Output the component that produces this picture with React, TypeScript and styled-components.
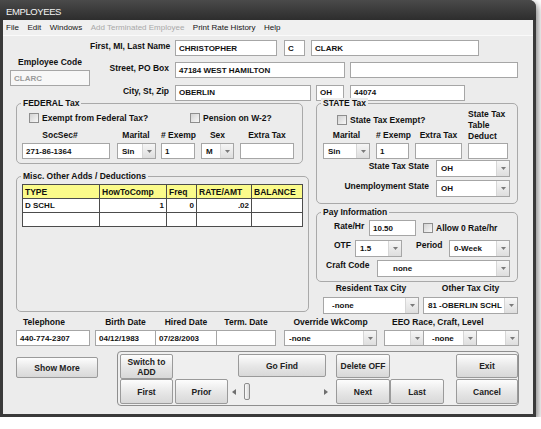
import styled, { createGlobalStyle } from "styled-components"

const FONT = `"Liberation Sans", Arial, sans-serif`

const GlobalStyle = createGlobalStyle`
  html, body {
    margin: 0;
    padding: 0;
    background: #fff;
  }
  body {
    font-family: ${FONT};
    color: #111;
  }
  *, *::before, *::after {
    box-sizing: border-box;
  }
`

/* ---------- window chrome ---------- */

const Window = styled.div`
  width: 536px;
  height: 417px;
  display: flex;
  flex-direction: column;
  background: #3a3a3a;
  padding: 0 3px 3px;
  border-radius: 0 7px 0 0;
  box-shadow: 2px 3px 7px rgba(0, 0, 0, 0.5);
`

const TitleBar = styled.div`
  height: 20px;
  margin: 0 -3px;
  padding: 2px 0 0 6px;
  display: flex;
  align-items: center;
  color: #f4f4f4;
  font-size: 9.5px;
  letter-spacing: -0.4px;
  background: linear-gradient(#4a4a4a, #2d2d2d);
  border-radius: 0 7px 0 0;
`

const Client = styled.div`
  flex: 1;
  display: flex;
  flex-direction: column;
  background: #ececec;
`

const MenuBar = styled.div`
  height: 16px;
  display: flex;
  align-items: center;
  gap: 8.5px;
  padding-left: 3px;
  background: #f0f0f0;
  border-bottom: 1px solid #fafafa;
  font-size: 8px;
`

const MenuItem = styled.span<{ $disabled?: boolean }>`
  color: ${({ $disabled }) => ($disabled ? "#a9a9a9" : "#151515")};
`

/* ---------- basic controls ---------- */

const Label = styled.div<{ $align?: "left" | "center" | "right"; $w?: number; $pad?: number }>`
  font-weight: bold;
  font-size: 8.5px;
  line-height: 10px;
  white-space: nowrap;
  text-align: ${({ $align = "left" }) => $align};
  ${({ $w }) => ($w !== undefined ? `width: ${$w}px; flex: none;` : "")}
  padding-top: ${({ $pad = 0 }) => $pad}px;
`

const TextBox = styled.div<{ $w: number; $h?: number; $right?: boolean; $muted?: boolean }>`
  width: ${({ $w }) => $w}px;
  height: ${({ $h = 16 }) => $h}px;
  flex: none;
  display: flex;
  align-items: center;
  justify-content: ${({ $right }) => ($right ? "flex-end" : "flex-start")};
  padding: 0 3px;
  background: ${({ $muted }) => ($muted ? "#f7f7f7" : "#fff")};
  border: 1px solid #a6a6a6;
  color: ${({ $muted }) => ($muted ? "#9a9a9a" : "#111")};
  font-weight: bold;
  font-size: 8px;
  white-space: nowrap;
  overflow: hidden;
`

const ComboFrame = styled.div<{ $w: number; $h?: number }>`
  width: ${({ $w }) => $w}px;
  height: ${({ $h = 17 }) => $h}px;
  flex: none;
  display: flex;
  background: #fff;
  border: 1px solid #a6a6a6;
`

const ComboValue = styled.div<{ $indent?: number }>`
  flex: 1;
  display: flex;
  align-items: center;
  padding-left: ${({ $indent = 4 }) => $indent}px;
  font-weight: bold;
  font-size: 8px;
  white-space: nowrap;
  overflow: hidden;
`

const ComboButton = styled.div`
  width: 13px;
  flex: none;
  display: flex;
  align-items: center;
  justify-content: center;
  border-left: 1px solid #d6d6d6;
  background: linear-gradient(#f6f6f6, #dedede);
`

const Combo = ({ w, h, value = "", indent }: { w: number; h?: number; value?: string; indent?: number }) => (
  <ComboFrame $w={w} $h={h}>
    <ComboValue $indent={indent}>{value}</ComboValue>
    <ComboButton>
      <svg width="5" height="3" viewBox="0 0 5 3">
        <path d="M0 0h5L2.5 3z" fill="#7a7a7a" />
      </svg>
    </ComboButton>
  </ComboFrame>
)

const CheckRow = styled.div`
  display: flex;
  align-items: center;
  gap: 3px;
`

const CheckSquare = styled.div`
  width: 10px;
  height: 10px;
  flex: none;
  border: 1px solid #8e8e8e;
  background: linear-gradient(135deg, #d2d2d2, #f8f8f8);
`

const Check = ({ label }: { label: string }) => (
  <CheckRow>
    <CheckSquare />
    <Label>{label}</Label>
  </CheckRow>
)

const Group = styled.div<{ $w: number; $h: number }>`
  position: relative;
  width: ${({ $w }) => $w}px;
  height: ${({ $h }) => $h}px;
  flex: none;
  border: 1px solid #a9a9a9;
  border-radius: 5px;
`

const GroupTitle = styled.div`
  position: absolute;
  top: -6px;
  left: 4px;
  padding: 0 2px;
  background: #ececec;
  font-weight: bold;
  font-size: 8.5px;
  line-height: 11px;
  white-space: nowrap;
`

const Button = styled.div<{ $w: number; $h?: number }>`
  width: ${({ $w }) => $w}px;
  height: ${({ $h = 25 }) => $h}px;
  flex: none;
  display: flex;
  align-items: center;
  justify-content: center;
  text-align: center;
  border: 1px solid #9a9a9a;
  border-radius: 2px;
  background: linear-gradient(#fdfdfd, #e6e6e6 55%, #d8d8d8);
  color: #222;
  font-weight: bold;
  font-size: 8.5px;
  line-height: 10px;
`

/* ---------- top: code and address ---------- */

const Top = styled.div`
  height: 67px;
  display: flex;
  padding: 4px 0 0 7px;
`

const CodeBlock = styled.div`
  width: 80px;
  margin-top: 17px;
  display: flex;
  flex-direction: column;
  gap: 3px;
`

const AddressGrid = styled.div`
  display: grid;
  grid-template-columns: 79px auto;
  column-gap: 6px;
  row-gap: 4px;
  align-items: start;
`

const FieldRow = styled.div<{ $gap?: number }>`
  display: flex;
  align-items: center;
  gap: ${({ $gap = 5 }) => $gap}px;
`

/* ---------- middle: tax groups ---------- */

const Middle = styled.div`
  display: flex;
  padding-left: 13px;
`

const Column = styled.div<{ $w: number; $ml?: number }>`
  width: ${({ $w }) => $w}px;
  margin-left: ${({ $ml = 0 }) => $ml}px;
  display: flex;
  flex-direction: column;
`

const FedBody = styled.div`
  padding: 9px 0 0 5px;
`

const FedChecks = styled.div`
  display: flex;
  padding-left: 7px;
  & > :first-child {
    width: 161px;
  }
`

const FedGrid = styled.div`
  display: grid;
  grid-template-columns: 88px 39px 34px 33px 54px;
  column-gap: 6px;
  row-gap: 3px;
  margin-top: 7px;
  & > :nth-child(2),
  & > :nth-child(7) {
    margin-left: 1px;
  }
`

const MiscBody = styled.div`
  padding: 7px 0 0 5px;
`

const Table = styled.table`
  border-collapse: collapse;
  table-layout: fixed;
  width: 280px;
  border: 1px solid #2e2e2e;
  font-weight: bold;
  font-size: 8px;

  th,
  td {
    height: 14px;
    padding: 0 2px;
    border: 1px solid #4c4c4c;
    white-space: nowrap;
    overflow: hidden;
  }
  th {
    background: #fbfb8a;
    text-align: left;
    font-size: 8.5px;
  }
  td {
    background: #fff;
  }
  td.num {
    text-align: right;
  }
`

const StateGrid = styled.div`
  display: grid;
  grid-template-columns: 47px 33px 47px 40px;
  grid-template-rows: 21px 10px 19px;
  column-gap: 6px;
  padding: 5px 0 0 6px;
  align-items: start;
  & > :nth-child(n + 6) {
    margin-top: 3px;
  }
`

const StateCheck = styled.div`
  grid-column: 1 / 4;
  align-self: center;
  display: flex;
  padding-left: 14px;
`

const DeductLabel = styled(Label)`
  grid-column: 4;
  grid-row: 1 / 3;
  line-height: 11px;
  white-space: normal;
`

const StateRows = styled.div`
  display: grid;
  grid-template-columns: 112px 74px;
  column-gap: 7px;
  row-gap: 3px;
  margin-top: 1px;
  align-items: start;
`

const PayBody = styled.div`
  padding-top: 7px;
  display: flex;
  flex-direction: column;
`

const PayRow = styled.div<{ $pl: number; $mt?: number }>`
  display: flex;
  align-items: flex-start;
  padding-left: ${({ $pl }) => $pl}px;
  margin-top: ${({ $mt = 0 }) => $mt}px;
`

const PayCheck = styled.div`
  align-self: center;
  margin-left: 7px;
`

const CityBlock = styled.div`
  display: flex;
  gap: 4px;
  margin: 1px 0 0 7px;
`

const Stack = styled.div<{ $gap?: number }>`
  display: flex;
  flex-direction: column;
  gap: ${({ $gap = 4 }) => $gap}px;
`

/* ---------- lower: dates and buttons ---------- */

const DatesRow = styled.div`
  display: flex;
  align-items: flex-start;
  margin-top: 3px;
  padding-left: 13px;
`

const JoinedBoxes = styled.div`
  display: flex;
  & > * + * {
    margin-left: -1px;
  }
`

const ButtonsRow = styled.div`
  display: flex;
  align-items: flex-start;
  margin-top: 5px;
  padding-left: 13px;
`

const ShowMore = styled(Button)`
  margin-top: 6px;
  margin-right: 19px;
`

const NavPanel = styled.div`
  width: 402px;
  height: 55px;
  padding: 2px 0 1px 2px;
  border: 1px solid #8e8e8e;
  border-radius: 4px;
  background: #efefef;
`

const NavRow = styled.div`
  display: flex;
  height: 25px;
  align-items: flex-start;
`

const Gap = styled.div<{ $w: number }>`
  width: ${({ $w }) => $w}px;
  flex: none;
`

const Scroller = styled.div`
  width: 108px;
  height: 25px;
  flex: none;
  display: flex;
  align-items: center;
  padding: 0 8px 0 4px;
`

const Thumb = styled.div`
  width: 6px;
  height: 17px;
  margin-left: 8px;
  border: 1px solid #8c8c8c;
  border-radius: 2px;
  background: linear-gradient(90deg, #fafafa, #d9d9d9);
`

const Spacer = styled.div`
  flex: 1;
`

const Arrow = ({ dir }: { dir: "left" | "right" }) => (
  <svg width="4" height="6" viewBox="0 0 4 6">
    <path d={dir === "left" ? "M4 0v6L0 3z" : "M0 0v6l4-3z"} fill="#6f6f6f" />
  </svg>
)

export default function App() {
  return (
    <>
      <GlobalStyle />
      <Window>
        <TitleBar>EMPLOYEES</TitleBar>
        <Client>
          <MenuBar>
            <MenuItem>File</MenuItem>
            <MenuItem>Edit</MenuItem>
            <MenuItem>Windows</MenuItem>
            <MenuItem $disabled>Add Terminated Employee</MenuItem>
            <MenuItem>Print Rate History</MenuItem>
            <MenuItem>Help</MenuItem>
          </MenuBar>

          <Top>
            <CodeBlock>
              <Label $align="center">Employee Code</Label>
              <TextBox $w={80} $muted>CLARC</TextBox>
            </CodeBlock>
            <AddressGrid>
              <Label $align="right" $pad={1}>First, MI, Last Name</Label>
              <FieldRow>
                <TextBox $w={102}>CHRISTOPHER</TextBox>
                <TextBox $w={21} style={{ marginLeft: 2 }}>C</TextBox>
                <TextBox $w={168} style={{ marginLeft: 1 }}>CLARK</TextBox>
              </FieldRow>
              <Label $align="right" $pad={1}>Street, PO Box</Label>
              <FieldRow>
                <TextBox $w={170}>47184 WEST HAMILTON</TextBox>
                <TextBox $w={168}></TextBox>
              </FieldRow>
              <Label $align="right" $pad={1}>City, St, Zip</Label>
              <FieldRow>
                <TextBox $w={136}>OBERLIN</TextBox>
                <TextBox $w={28}>OH</TextBox>
                <TextBox $w={115} style={{ marginLeft: 1 }}>44074</TextBox>
              </FieldRow>
            </AddressGrid>
          </Top>

          <Middle>
            <Column $w={293}>
              <Group $w={287} $h={61}>
                <GroupTitle>FEDERAL Tax</GroupTitle>
                <FedBody>
                  <FedChecks>
                    <Check label="Exempt from Federal Tax?" />
                    <Check label="Pension on W-2?" />
                  </FedChecks>
                  <FedGrid>
                    <Label $align="center" style={{ paddingRight: 12 }}>SocSec#</Label>
                    <Label $align="center">Marital</Label>
                    <Label $align="center"># Exemp</Label>
                    <Label $align="center">Sex</Label>
                    <Label $align="center">Extra Tax</Label>
                    <TextBox $w={88}>271-86-1364</TextBox>
                    <Combo w={39} h={16} value="Sin" />
                    <TextBox $w={34}>1</TextBox>
                    <Combo w={33} h={16} value="M" />
                    <TextBox $w={54}></TextBox>
                  </FedGrid>
                </FedBody>
              </Group>

              <Group $w={293} $h={136} style={{ marginTop: 12 }}>
                <GroupTitle>Misc. Other Adds / Deductions</GroupTitle>
                <MiscBody>
                  <Table>
                    <colgroup>
                      <col style={{ width: 77 }} />
                      <col style={{ width: 67 }} />
                      <col style={{ width: 30 }} />
                      <col style={{ width: 55 }} />
                      <col style={{ width: 51 }} />
                    </colgroup>
                    <thead>
                      <tr>
                        <th>TYPE</th>
                        <th>HowToComp</th>
                        <th>Freq</th>
                        <th>RATE/AMT</th>
                        <th>BALANCE</th>
                      </tr>
                    </thead>
                    <tbody>
                      <tr>
                        <td>D SCHL</td>
                        <td className="num">1</td>
                        <td className="num">0</td>
                        <td className="num">.02</td>
                        <td></td>
                      </tr>
                      <tr>
                        <td></td>
                        <td></td>
                        <td></td>
                        <td></td>
                        <td></td>
                      </tr>
                    </tbody>
                  </Table>
                </MiscBody>
              </Group>
            </Column>

            <Column $w={202} $ml={7}>
              <Group $w={202} $h={101}>
                <GroupTitle>STATE Tax</GroupTitle>
                <StateGrid>
                  <StateCheck>
                    <Check label="State Tax Exempt?" />
                  </StateCheck>
                  <DeductLabel>State Tax Table Deduct</DeductLabel>
                  <Label $align="center">Marital</Label>
                  <Label $align="center"># Exemp</Label>
                  <Label $align="center">Extra Tax</Label>
                  <Combo w={47} h={16} value="Sin" />
                  <TextBox $w={33}>1</TextBox>
                  <TextBox $w={47}></TextBox>
                  <TextBox $w={40}></TextBox>
                </StateGrid>
                <StateRows>
                  <Label $align="right" $pad={1}>State Tax State</Label>
                  <Combo w={74} value="OH" />
                  <Label $align="right" $pad={1}>Unemployment State</Label>
                  <Combo w={74} value="OH" />
                </StateRows>
              </Group>

              <Group $w={202} $h={70} style={{ marginTop: 8 }}>
                <GroupTitle>Pay Information</GroupTitle>
                <PayBody>
                  <PayRow $pl={17}>
                    <Label $w={35} $pad={1}>Rate/Hr</Label>
                    <TextBox $w={47}>10.50</TextBox>
                    <PayCheck>
                      <Check label="Allow 0 Rate/hr" />
                    </PayCheck>
                  </PayRow>
                  <PayRow $pl={17} $mt={4}>
                    <Label $w={21}>OTF</Label>
                    <Combo w={47} value="1.5" />
                    <Label $w={33} style={{ marginLeft: 14 }}>Period</Label>
                    <Combo w={61} value="0-Week" />
                  </PayRow>
                  <PayRow $pl={9} $mt={3}>
                    <Label $w={51}>Craft Code</Label>
                    <Combo w={133} value="none" indent={15} />
                  </PayRow>
                </PayBody>
              </Group>

              <CityBlock>
                <Stack>
                  <Label $align="center">Resident Tax City</Label>
                  <Combo w={96} value="-none" indent={8} />
                </Stack>
                <Stack>
                  <Label $align="center">Other Tax City</Label>
                  <Combo w={95} value="81 -OBERLIN SCHL" />
                </Stack>
              </CityBlock>
            </Column>
          </Middle>

          <DatesRow>
            <Stack $gap={3}>
              <Label style={{ paddingLeft: 7 }}>Telephone</Label>
              <TextBox $w={74}>440-774-2307</TextBox>
            </Stack>
            <Stack $gap={3} style={{ marginLeft: 5 }}>
              <JoinedBoxes>
                <Label $w={61} $align="center">Birth Date</Label>
                <Label $w={62} $align="center">Hired Date</Label>
                <Label $w={60} $align="center">Term. Date</Label>
              </JoinedBoxes>
              <JoinedBoxes>
                <TextBox $w={61}>04/12/1983</TextBox>
                <TextBox $w={62}>07/28/2003</TextBox>
                <TextBox $w={60}></TextBox>
              </JoinedBoxes>
            </Stack>
            <Stack $gap={3} style={{ marginLeft: 8 }}>
              <Label $align="center">Override WkComp</Label>
              <Combo w={93} h={16} value="-none" />
            </Stack>
            <Stack $gap={3} style={{ marginLeft: 7 }}>
              <Label style={{ paddingLeft: 8 }}>EEO Race, Craft, Level</Label>
              <JoinedBoxes>
                <Combo w={40} h={16} />
                <Combo w={54} h={16} value="-none" indent={8} />
                <Combo w={43} h={16} />
              </JoinedBoxes>
            </Stack>
          </DatesRow>

          <ButtonsRow>
            <ShowMore $w={82} $h={21}>Show More</ShowMore>
            <NavPanel>
              <NavRow>
                <Button $w={53}>
                  Switch to
                  <br />
                  ADD
                </Button>
                <Gap $w={65} />
                <Button $w={88} $h={23}>Go Find</Button>
                <Gap $w={10} />
                <Button $w={54} $h={24}>Delete OFF</Button>
                <Gap $w={66} />
                <Button $w={62} $h={24}>Exit</Button>
              </NavRow>
              <NavRow>
                <Button $w={53}>First</Button>
                <Gap $w={2} />
                <Button $w={53}>Prior</Button>
                <Scroller>
                  <Arrow dir="left" />
                  <Thumb />
                  <Spacer />
                  <Arrow dir="right" />
                </Scroller>
                <Button $w={54}>Next</Button>
                <Button $w={54}>Last</Button>
                <Gap $w={12} />
                <Button $w={62}>Cancel</Button>
              </NavRow>
            </NavPanel>
          </ButtonsRow>
        </Client>
      </Window>
    </>
  )
}
